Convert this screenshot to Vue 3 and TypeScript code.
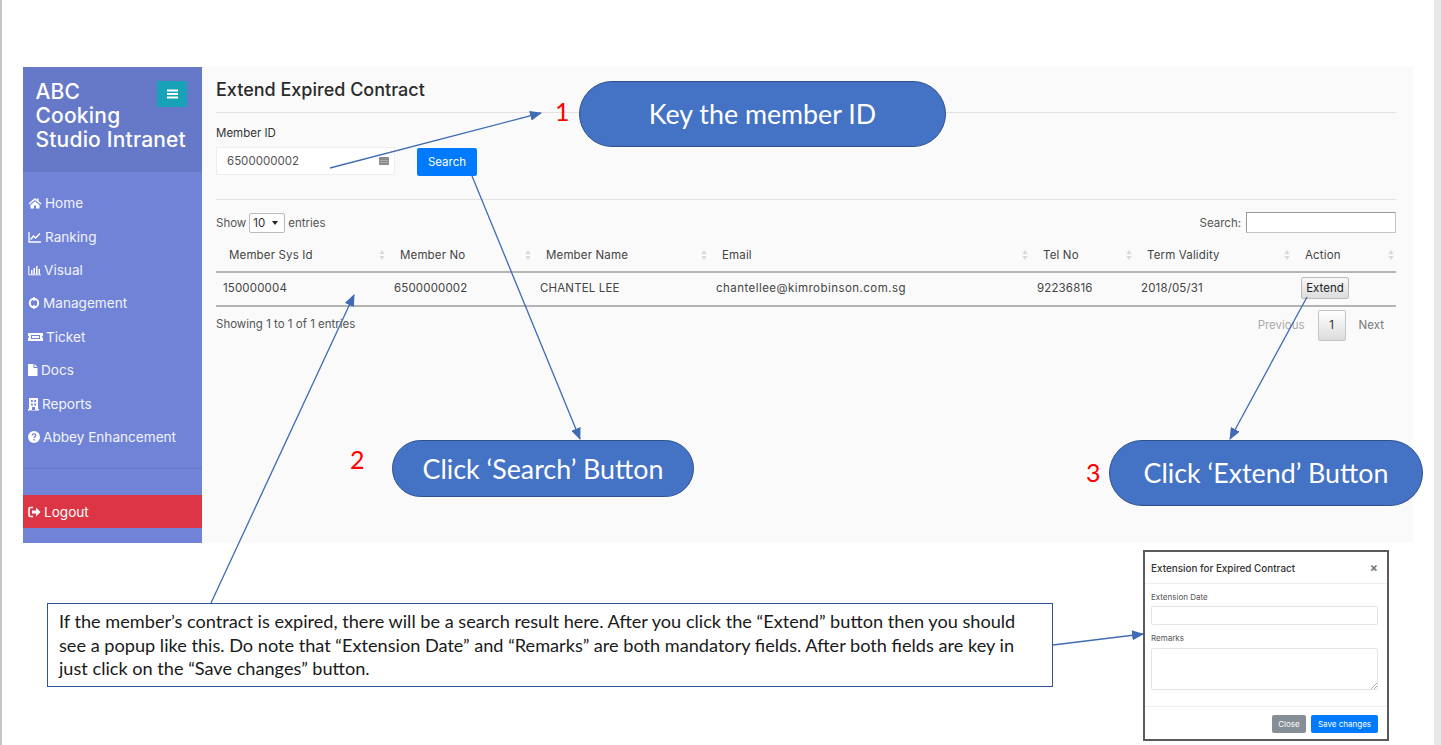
<template>
  <div class="page">
    <div class="app">
      <aside class="sidebar">
        <div class="brand">
          <div class="brand-name">ABC<br />Cooking<br />Studio Intranet</div>
          <button class="toggle">
            <svg width="11" height="10" viewBox="0 0 11 10"><path d="M0 0.5h11v2H0zM0 4h11v2H0zM0 7.5h11v2H0z" fill="#fff" /></svg>
          </button>
        </div>
        <nav class="nav">
          <a v-for="item in navItems" :key="item.label" class="nav-item">
            <svg class="nav-icon" :width="item.w" height="14" :viewBox="`0 0 ${item.w} 14`" v-html="item.icon"></svg>
            <span>{{ item.label }}</span>
          </a>
        </nav>
        <div class="logout">
          <svg class="nav-icon" width="13" height="14" viewBox="0 0 13 14"><path d="M5 2.500H2.500Q1 2.500 1 4v6q0 1.500 1.500 1.500H5" fill="none" stroke="#fff" stroke-width="1.600" /><path d="M4 5.500h4V2.500L12.500 7 8 11.500v-3H4z" fill="#fff" /></svg>
          <span>Logout</span>
        </div>
      </aside>

      <main class="content">
        <h1 class="title">Extend Expired Contract</h1>
        <div class="form">
          <label class="field-label">Member ID</label>
          <div class="form-row">
            <div class="id-input">
              <span>6500000002</span>
              <svg width="10" height="8" viewBox="0 0 10 8"><rect width="10" height="8" rx="1" fill="#8a8a8a" /><path d="M1.500 3.500h7M1.500 5.500h7" stroke="#ddd" stroke-width="0.800" stroke-dasharray="1 1" /></svg>
            </div>
            <button class="search-btn">Search</button>
          </div>
        </div>

        <div class="table-tools">
          <div class="length">
            Show
            <span class="select">10<i class="caret"></i></span>
            entries
          </div>
          <div class="filter">
            Search:
            <span class="filter-input"></span>
          </div>
        </div>

        <table class="grid">
          <colgroup>
            <col v-for="c in columns" :key="c.name" :style="{ width: c.width + 'px' }" />
          </colgroup>
          <thead>
            <tr>
              <th v-for="c in columns" :key="c.name">
                {{ c.name }}
                <svg class="sort" width="6" height="10" viewBox="0 0 6 10"><path d="M3 0l2.500 4h-5zM3 10L.5 6h5z" fill="#d8d8d8" /></svg>
              </th>
            </tr>
          </thead>
          <tbody>
            <tr>
              <td>150000004</td>
              <td>6500000002</td>
              <td>CHANTEL LEE</td>
              <td class="email">chantellee@kimrobinson.com.sg</td>
              <td>92236816</td>
              <td>2018/05/31</td>
              <td><button class="extend-btn">Extend</button></td>
            </tr>
          </tbody>
        </table>

        <div class="table-foot">
          <div>Showing 1 to 1 of 1 entries</div>
          <div class="pager">
            <span class="pager-link">Previous</span>
            <span class="pager-current">1</span>
            <span class="pager-link next">Next</span>
          </div>
        </div>
      </main>
    </div>

    <div class="bottom">
      <div class="note">
        If the member’s contract is expired, there will be a search result here. After you click the “Extend” button then you should<br />
        see a popup like this. Do note that “Extension Date” and “Remarks” are both mandatory fields. After both fields are key in<br />
        just click on the “Save changes” button.
      </div>
      <div class="modal">
        <div class="modal-head">
          <span>Extension for Expired Contract</span>
          <span class="modal-x">×</span>
        </div>
        <div class="modal-body">
          <div class="modal-label">Extension Date</div>
          <div class="modal-input"></div>
          <div class="modal-label second">Remarks</div>
          <div class="modal-area">
            <svg class="grip" width="6" height="6" viewBox="0 0 6 6"><path d="M6 0L0 6M6 3L3 6" stroke="#999" stroke-width="0.800" /></svg>
          </div>
        </div>
        <div class="modal-foot">
          <button class="btn-close">Close</button>
          <button class="btn-save">Save changes</button>
        </div>
      </div>
    </div>

    <svg class="arrows" width="1441" height="745" viewBox="0 0 1441 745">
      <defs>
        <marker id="head" markerWidth="12" markerHeight="10" refX="11" refY="5" orient="auto" markerUnits="userSpaceOnUse">
          <path d="M0 0L12 5L0 10z" fill="#3f6cb4" />
        </marker>
      </defs>
      <line v-for="(a, i) in arrows" :key="i" :x1="a[0]" :y1="a[1]" :x2="a[2]" :y2="a[3]" stroke="#3f6cb4" stroke-width="1.300" marker-end="url(#head)" />
    </svg>

    <div class="callout c1">Key the member ID</div>
    <div class="callout c2">Click ‘Search’ Button</div>
    <div class="callout c3">Click ‘Extend’ Button</div>
    <span class="num n1">1</span>
    <span class="num n2">2</span>
    <span class="num n3">3</span>
  </div>
</template>

<script setup lang="ts">
const navItems = [
  { label: 'Home', w: 14, icon: '<path d="M7 2L0.500 7.500l.8 1L7 4l5.700 4.500.8-1L10.500 5V2.500H9V3.800zM2.500 9v3.500H6V9.500h2v3h3.500V9L7 5.200z" fill="#fff"/>' },
  { label: 'Ranking', w: 14, icon: '<path d="M1 2v10h12" fill="none" stroke="#fff" stroke-width="1.300"/><path d="M2.500 9.500L5.500 6l2 2L12 3.500" fill="none" stroke="#fff" stroke-width="1.500"/>' },
  { label: 'Visual', w: 13, icon: '<path d="M.8 3v8.800h12" fill="none" stroke="#fff" stroke-width="1"/><path d="M3 7h1.500v4H3zM5.500 5H7v6H5.500zM8 3h1.500v8H8zM10.500 6H12v5h-1.500z" fill="#fff"/>' },
  { label: 'Management', w: 12, icon: '<circle cx="6" cy="7" r="4.200" fill="none" stroke="#fff" stroke-width="2"/><path d="M5.300 1h1.400v4H5.300zM5.300 9h1.400v4H5.300z" fill="#fff"/>' },
  { label: 'Ticket', w: 15, icon: '<path d="M0 3h15v3a1 1 0 0 0 0 2v3H0V8a1 1 0 0 0 0-2z" fill="#fff"/><rect x="3" y="5" width="9" height="4" fill="#7083d6"/><rect x="4" y="6" width="7" height="2" fill="#fff"/>' },
  { label: 'Docs', w: 10, icon: '<path d="M0 1h5.500v4H9.500v8H0zM6.500 1l3 3h-3z" fill="#fff"/>' },
  { label: 'Reports', w: 11, icon: '<path fill-rule="evenodd" d="M1 1h9v11h1v1.500H0V12h1zM3 3v2h1.800V3zM6.200 3v2H8V3zM3 6.500v2h1.800v-2zM6.200 6.500v2H8v-2zM4 10v3h3v-3z" fill="#fff"/>' },
  { label: 'Abbey Enhancement', w: 12, icon: '<circle cx="6" cy="7" r="6" fill="#fff"/><path d="M4.200 5.500Q4.300 3.800 6 3.800t1.800 1.500q0 .9-.9 1.400-.9.500-.9 1.300" fill="none" stroke="#7083d6" stroke-width="1.300"/><rect x="5.300" y="9" width="1.400" height="1.400" fill="#7083d6"/>' },
]

const columns = [
  { name: 'Member Sys Id', width: 171 },
  { name: 'Member No', width: 146 },
  { name: 'Member Name', width: 176 },
  { name: 'Email', width: 321 },
  { name: 'Tel No', width: 104 },
  { name: 'Term Validity', width: 158 },
  { name: 'Action', width: 104 },
]

const arrows: number[][] = [
  [330, 168, 541, 113],
  [472, 176, 580, 439],
  [1307, 297, 1230, 439],
  [211, 603, 354, 295],
  [1053, 645, 1143, 634],
]
</script>

<style>
html,
body {
  margin: 0;
  background: #fff;
}
</style>

<style scoped>
.page {
  position: relative;
  width: 1441px;
  height: 745px;
  box-sizing: border-box;
  padding: 67px 21px 0 21px;
  overflow: hidden;
  background: #fff;
  border-left: 2px solid #c6c6c6;
  border-right: 7px solid #e8e8e8;
  font-family: Inter, "Liberation Sans", sans-serif;
  color: #333;
}
.app {
  display: flex;
  height: 476px;
}
.sidebar {
  width: 179px;
  flex: none;
  display: flex;
  flex-direction: column;
  background: #7083d6;
  color: #fff;
}
.brand {
  position: relative;
  height: 105px;
  box-sizing: border-box;
  padding: 13px 15px 0 12.500px;
  background: #6579c8;
}
.brand-name {
  font-size: 21px;
  line-height: 24px;
  font-weight: 500;
  letter-spacing: 0.200px;
  white-space: nowrap;
}
.toggle {
  position: absolute;
  top: 14px;
  right: 15px;
  width: 30px;
  height: 26px;
  border: none;
  padding: 0;
  background: #17a2b8;
  display: flex;
  align-items: center;
  justify-content: center;
}
.nav {
  height: 297px;
  box-sizing: border-box;
  padding-top: 14.500px;
  border-bottom: 1px solid #6579c8;
}
.nav-item {
  height: 33.4px;
  padding-left: 5px;
  display: flex;
  align-items: center;
  gap: 3px;
  font-size: 13.600px;
  color: #f2f4fc;
}
.nav-icon {
  flex: none;
}
.logout {
  margin-top: 26px;
  height: 33px;
  padding-left: 5px;
  display: flex;
  align-items: center;
  gap: 3px;
  font-size: 13.600px;
  background: #dc3545;
  color: #fff;
}
.content {
  flex: 1;
  box-sizing: border-box;
  padding: 0 17px 0 14px;
  background: #fafafa;
  font-size: 11.500px;
}
.title {
  margin: 0;
  height: 46px;
  box-sizing: border-box;
  padding-top: 12px;
  border-bottom: 1px solid #e2e2e2;
  font-size: 18px;
  line-height: 22px;
  font-weight: 500;
  color: #2b2b2b;
}
.form {
  height: 87px;
  box-sizing: border-box;
  padding-top: 13px;
  border-bottom: 1px solid #e2e2e2;
}
.field-label {
  display: block;
  height: 21px;
  line-height: 15px;
}
.form-row {
  display: flex;
  gap: 22px;
}
.id-input {
  width: 179px;
  height: 28px;
  box-sizing: border-box;
  padding: 0 5px 0 10px;
  display: flex;
  align-items: center;
  justify-content: space-between;
  background: #fff;
  border: 1px solid #eee;
  color: #555;
}
.search-btn {
  width: 60px;
  height: 28px;
  margin-top: 1px;
  padding: 0;
  border: none;
  border-radius: 2px;
  background: #007bff;
  color: #fff;
  font: inherit;
}
.table-tools {
  height: 38px;
  padding-top: 12px;
  box-sizing: border-box;
  display: flex;
  justify-content: space-between;
  align-items: flex-start;
  color: #555;
}
.length,
.filter {
  display: flex;
  align-items: center;
  gap: 3px;
  height: 21px;
}
.filter {
  gap: 5px;
}
.select {
  width: 36px;
  height: 20px;
  box-sizing: border-box;
  padding: 0 0 0 3px;
  position: relative;
  display: flex;
  align-items: center;
  background: #fff;
  border: 1px solid #bbb;
  border-radius: 2px;
  color: #333;
}
.caret {
  position: absolute;
  right: 6px;
  top: 7px;
  border: 3px solid transparent;
  border-top: 4px solid #222;
  border-bottom: 0;
}
.filter-input {
  width: 150px;
  height: 21px;
  box-sizing: border-box;
  background: #fff;
  border: 1px solid #c4c4c4;
  border-top-color: #999;
  border-left-color: #999;
}
.grid {
  width: 1180px;
  table-layout: fixed;
  border-collapse: collapse;
  color: #444;
  letter-spacing: 0.150px;
}
.grid th {
  position: relative;
  height: 33px;
  padding: 0 0 0 13px;
  text-align: left;
  font-weight: 400;
  border-bottom: 2px solid #b4b4b4;
}
.sort {
  position: absolute;
  right: 2px;
  top: 12px;
}
.grid td {
  height: 33.500px;
  padding: 0 0 1px 7px;
  box-sizing: border-box;
  border-bottom: 2px solid #b4b4b4;
}
.grid td.email {
  letter-spacing: 0.450px;
}
.extend-btn {
  display: block;
  width: 48px;
  height: 22px;
  margin-left: 2px;
  padding: 0;
  border: 1px solid #bbb;
  border-radius: 2px;
  background: linear-gradient(#f8f8f8, #dcdcdc);
  font: inherit;
  color: #222;
}
.table-foot {
  display: flex;
  justify-content: space-between;
  align-items: flex-start;
  padding-top: 3px;
  color: #555;
}
.table-foot > div:first-child {
  padding-top: 7px;
}
.pager {
  display: flex;
  align-items: center;
  height: 31px;
  padding-right: 12px;
}
.pager-link {
  color: #aaa;
}
.pager-link.next {
  color: #777;
}
.pager-current {
  width: 28px;
  height: 31px;
  box-sizing: border-box;
  margin: 0 13px 0 13px;
  display: flex;
  align-items: center;
  justify-content: center;
  border: 1px solid #c4c4c4;
  border-radius: 2px;
  background: linear-gradient(#fff, #dcdcdc);
  color: #333;
}
.bottom {
  position: relative;
  display: flex;
  justify-content: space-between;
  height: 202px;
  padding: 7px 24px 0 24px;
}
.note {
  width: 1006px;
  height: 84px;
  box-sizing: border-box;
  margin-top: 53px;
  padding: 6px 11px 0;
  border: 1px solid #2f5597;
  background: #fff;
  font-family: Lato, "Open Sans", sans-serif;
  font-size: 18.150px;
  line-height: 23.500px;
  color: #1a1a1a;
  white-space: nowrap;
}
.modal {
  width: 246px;
  height: 191px;
  box-sizing: border-box;
  border: 2px solid #5a5a5a;
  background: #fff;
  font-size: 8px;
  color: #555;
}
.modal-head {
  height: 32px;
  box-sizing: border-box;
  padding: 0 9px 0 6px;
  display: flex;
  align-items: center;
  justify-content: space-between;
  border-bottom: 1px solid #eee;
  font-size: 9.900px;
  font-weight: 500;
  color: #333;
}
.modal-x {
  font-size: 12px;
  font-weight: 700;
  color: #777;
}
.modal-body {
  height: 123px;
  box-sizing: border-box;
  padding: 8px 9px 0 6px;
  border-bottom: 1px solid #eee;
}
.modal-label {
  height: 14px;
  line-height: 10px;
}
.modal-label.second {
  margin-top: 8px;
  height: 15px;
}
.modal-input {
  height: 19px;
  box-sizing: border-box;
  border: 1px solid #e4e4e4;
  border-radius: 2px;
}
.modal-area {
  position: relative;
  height: 42px;
  box-sizing: border-box;
  border: 1px solid #e4e4e4;
  border-radius: 2px;
}
.grip {
  position: absolute;
  right: 0;
  bottom: 0;
}
.modal-foot {
  display: flex;
  justify-content: flex-end;
  gap: 5px;
  padding: 8px 9px 0 0;
}
.modal-foot button {
  height: 18px;
  padding: 0;
  border: none;
  border-radius: 2px;
  color: #fff;
  font: inherit;
  font-size: 8px;
}
.btn-close {
  width: 34px;
  background: #868e96;
}
.btn-save {
  width: 67px;
  background: #007bff;
}
.arrows {
  position: absolute;
  left: -2px;
  top: 0;
  pointer-events: none;
}
.callout {
  position: absolute;
  display: flex;
  align-items: center;
  justify-content: center;
  box-sizing: border-box;
  border: 1px solid #2f528f;
  border-radius: 34px;
  background: #4472c4;
  color: #fff;
  font-family: Lato, "Open Sans", sans-serif;
  font-size: 26.800px;
  white-space: nowrap;
}
.c1 {
  left: 577px;
  top: 81px;
  width: 367px;
  height: 66px;
}
.c2 {
  left: 390px;
  top: 440px;
  width: 302px;
  height: 57px;
}
.c3 {
  left: 1107px;
  top: 440px;
  width: 314px;
  height: 66px;
}
.num {
  position: absolute;
  color: #f00;
  font-family: Lato, "Open Sans", sans-serif;
  font-size: 25px;
  line-height: 30px;
}
.n1 {
  left: 553px;
  top: 96px;
}
.n2 {
  left: 348px;
  top: 444px;
}
.n3 {
  left: 1084px;
  top: 457px;
}
</style>
